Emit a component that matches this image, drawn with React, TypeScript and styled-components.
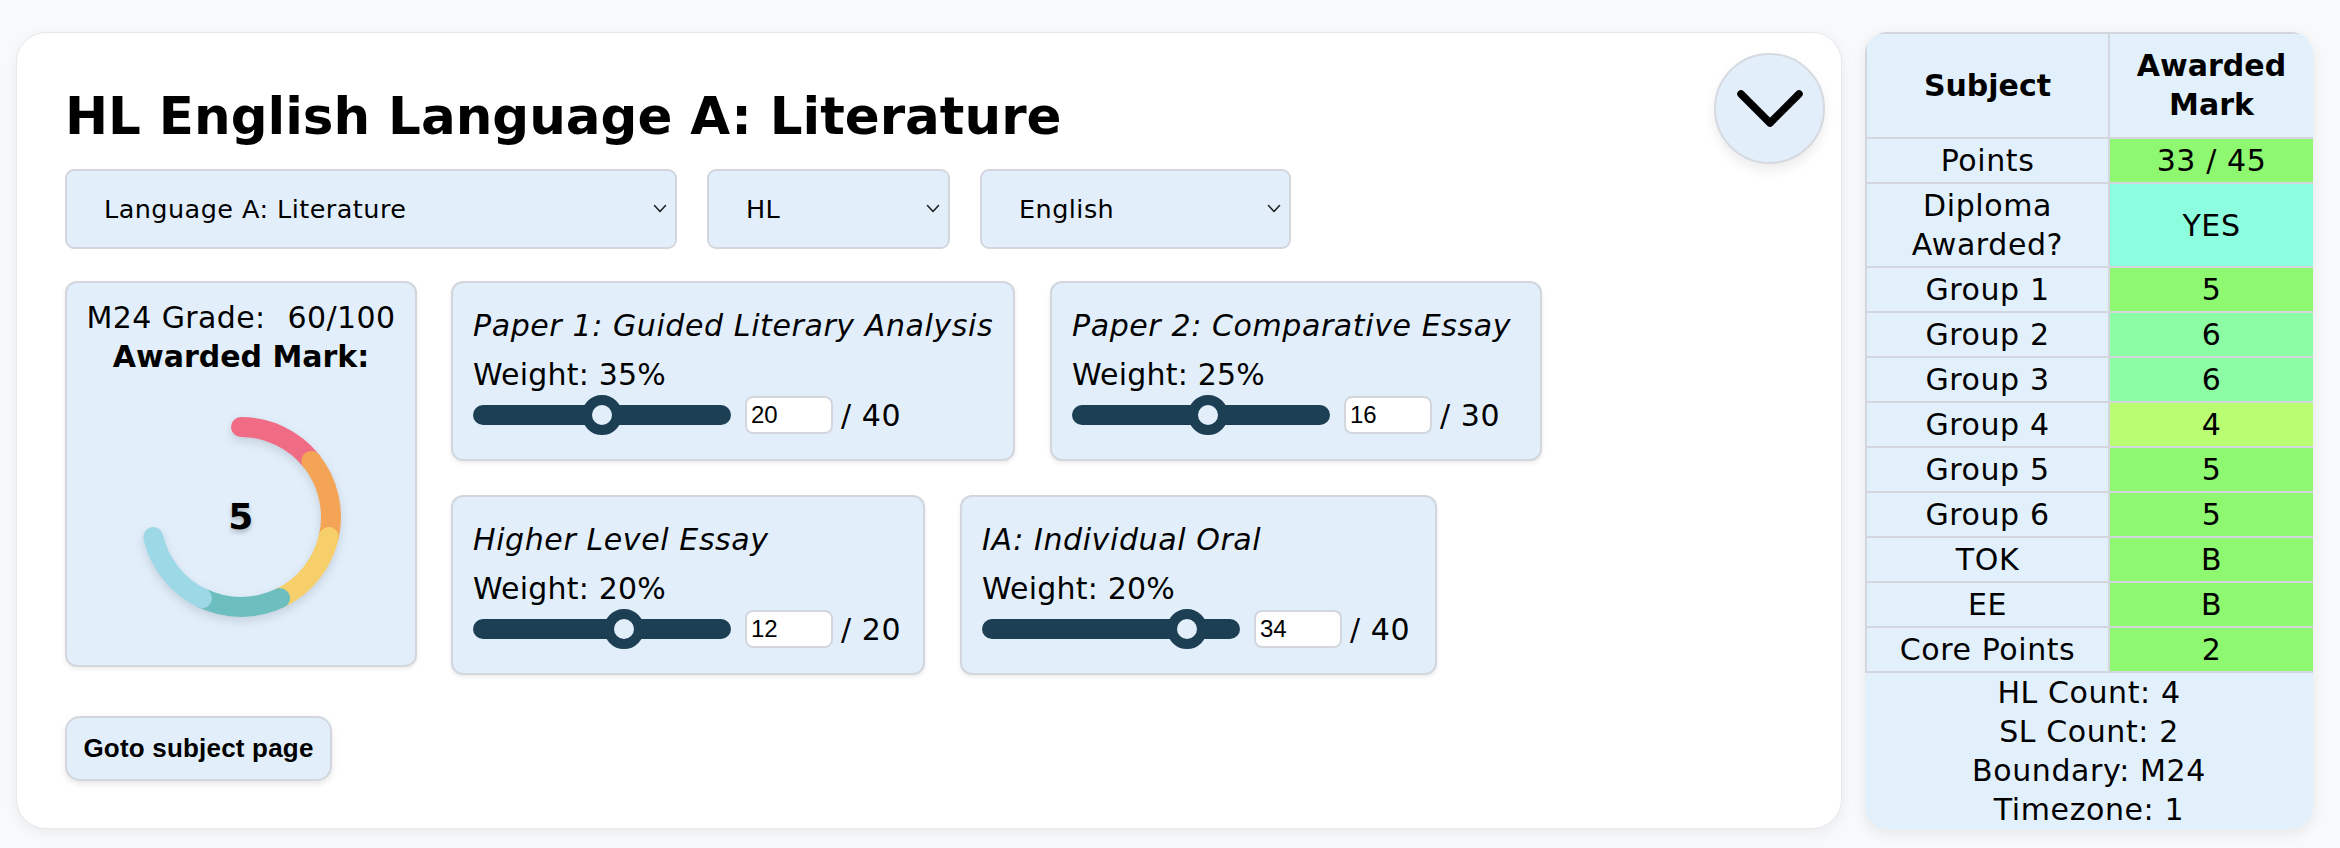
import React from 'react';
import styled, { createGlobalStyle } from 'styled-components';

const FONT = `"DejaVu Sans", Inter, sans-serif`;
const ARIAL = `'Liberation Sans', Arial, sans-serif`;
const LIGHT = '#e2effb';
const LINE = '#d3d7dd';
const NAVY = '#1c3f53';

const GlobalStyle = createGlobalStyle`
  html, body { margin: 0; padding: 0; background: #f8f9fb; }
  body { font-family: ${FONT}; color: #000; }
  * { box-sizing: border-box; }
`;

const Page = styled.div`
  display: flex;
  align-items: flex-start;
  gap: 23px;
  width: 2340px;
  height: 848px;
  padding: 32px 27px 19px 16px;
`;

const Card = styled.section`
  flex: 1;
  height: 797px;
  background: #fff;
  border: 1.5px solid #e6e8ec;
  border-radius: 30px;
  box-shadow: 0 4px 14px rgba(0, 0, 0, 0.06);
  padding: 20px 16px 0 48px;
  display: flex;
  flex-direction: column;
`;

const Header = styled.div`
  display: flex;
  justify-content: space-between;
  align-items: flex-start;
`;

const Title = styled.h1`
  margin: 31px 0 0;
  font-size: 51.5px;
  font-weight: 700;
  line-height: 65px;
`;

const ToggleButton = styled.button`
  width: 111px;
  height: 111px;
  border-radius: 50%;
  background: ${LIGHT};
  border: 2px solid #d6dae0;
  box-shadow: 0 6px 12px rgba(0, 0, 0, 0.08);
  display: flex;
  align-items: center;
  justify-content: center;
  padding: 0;
`;

const SelectRow = styled.div`
  display: flex;
  gap: 30px;
  margin-top: 5px;
`;

const SelectWrap = styled.div<{ $w: number }>`
  position: relative;
  width: ${(p) => p.$w}px;
  height: 80px;
`;

const Select = styled.select`
  appearance: none;
  width: 100%;
  height: 100%;
  background: ${LIGHT};
  border: 2px solid ${LINE};
  border-radius: 9px;
  padding: 0 0 0 37px;
  font-family: ${FONT};
  font-size: 25.5px;
  letter-spacing: 0.45px;
  color: #000;
`;

const SelectChevron = styled.svg`
  position: absolute;
  right: 10px;
  top: 35px;
  pointer-events: none;
`;

const Content = styled.div`
  display: flex;
  align-items: flex-start;
  gap: 34px;
  margin-top: 32px;
`;

const GradeCard = styled.div`
  width: 352px;
  height: 386px;
  background: ${LIGHT};
  border: 2px solid ${LINE};
  border-radius: 12px;
  box-shadow: 0 2px 4px rgba(0, 0, 0, 0.08);
  padding-top: 15px;
  display: flex;
  flex-direction: column;
  align-items: center;
  font-size: 30px;
  line-height: 39px;
  letter-spacing: 0.4px;
`;

const GradeLine = styled.div`
  display: flex;
  gap: 22px;
`;

const AwardedLabel = styled.div`
  font-weight: 700;
  letter-spacing: 0;
`;

const Donut = styled.div`
  display: grid;
  place-items: center;
  margin-top: 21px;
  width: 240px;
  height: 240px;
  & > * {
    grid-area: 1 / 1;
  }
`;

const DonutSvg = styled.svg`
  filter: drop-shadow(0 4px 5px rgba(0, 0, 0, 0.13));
`;

const DonutValue = styled.span`
  font-size: 36px;
  font-weight: 700;
  line-height: 1;
  text-shadow: 0 3px 5px rgba(0, 0, 0, 0.25);
`;

const Components = styled.div`
  flex: 1;
  display: flex;
  flex-wrap: wrap;
  align-content: flex-start;
  gap: 34px 35px;
`;

const CompCard = styled.div<{ $w: number }>`
  width: ${(p) => p.$w}px;
  background: ${LIGHT};
  border: 2px solid ${LINE};
  border-radius: 12px;
  box-shadow: 0 2px 4px rgba(0, 0, 0, 0.08);
  padding: 23px 20px 24px 20px;
  font-size: 30px;
  line-height: 39px;
  letter-spacing: 0.6px;
  white-space: nowrap;
`;

const CompTitle = styled.div`
  font-style: italic;
  margin-bottom: 10px;
`;

const Weight = styled.div`
  margin-bottom: 1px;
  letter-spacing: 0.2px;
`;

const SliderRow = styled.div`
  display: flex;
  align-items: center;
  height: 40px;
`;

const Range = styled.input`
  appearance: none;
  -webkit-appearance: none;
  width: 258px;
  height: 40px;
  margin: 0;
  background: transparent;
  &::-webkit-slider-runnable-track {
    height: 20px;
    background: ${NAVY};
    border-radius: 10px;
  }
  &::-webkit-slider-thumb {
    -webkit-appearance: none;
    appearance: none;
    box-sizing: border-box;
    width: 40px;
    height: 40px;
    margin-top: -10px;
    border-radius: 50%;
    background: ${LIGHT};
    border: 10px solid ${NAVY};
  }
`;

const NumInput = styled.input`
  width: 88px;
  height: 38px;
  margin-left: 14px;
  border: 2px solid ${LINE};
  border-radius: 8px;
  background: #fff;
  padding: 0 4px;
  font-family: ${ARIAL};
  font-size: 24px;
  letter-spacing: 0;
  color: #000;
`;

const MaxLabel = styled.span`
  margin-left: 8px;
`;

const GotoButton = styled.button`
  align-self: flex-start;
  margin-top: 41px;
  width: 267px;
  height: 65px;
  background: ${LIGHT};
  border: 2px solid ${LINE};
  border-radius: 15px;
  box-shadow: 0 3px 6px rgba(0, 0, 0, 0.1);
  font-family: ${ARIAL};
  font-weight: 700;
  font-size: 26px;
  letter-spacing: 0.2px;
  color: #000;
  padding: 0;
`;

const Panel = styled.aside`
  width: 448px;
  background: #e2f0fc;
  border-radius: 22px;
  overflow: hidden;
  box-shadow: 0 4px 14px rgba(0, 0, 0, 0.08);
  font-size: 30px;
  line-height: 39px;
  letter-spacing: 0.6px;
`;

const Table = styled.table`
  width: 100%;
  border-collapse: collapse;
  table-layout: fixed;
`;

const Th = styled.th`
  border: 2px solid ${LINE};
  padding: 12px 4px 13px;
  font-weight: 700;
  letter-spacing: 0;
  text-align: center;
`;

const Td = styled.td<{ $bg?: string }>`
  border: 2px solid ${LINE};
  padding: 2px 4px;
  text-align: center;
  font-weight: 400;
  background: ${(p) => p.$bg || 'transparent'};
`;

const Footer = styled.div`
  text-align: center;
`;

const GREEN = '#8ef870';
const AQUA = '#8cfddf';
const MINT = '#8cfca5';
const LIME = '#b8fd72';

const rows: [string, string, string][] = [
  ['Points', '33 / 45', GREEN],
  ['Diploma Awarded?', 'YES', AQUA],
  ['Group 1', '5', GREEN],
  ['Group 2', '6', MINT],
  ['Group 3', '6', MINT],
  ['Group 4', '4', LIME],
  ['Group 5', '5', GREEN],
  ['Group 6', '5', GREEN],
  ['TOK', 'B', GREEN],
  ['EE', 'B', GREEN],
  ['Core Points', '2', GREEN],
];

const components = [
  { title: 'Paper 1: Guided Literary Analysis', weight: 35, value: 20, max: 40, width: 564 },
  { title: 'Paper 2: Comparative Essay', weight: 25, value: 16, max: 30, width: 492 },
  { title: 'Higher Level Essay', weight: 20, value: 12, max: 20, width: 474 },
  { title: 'IA: Individual Oral', weight: 20, value: 34, max: 40, width: 477 },
];

const segColors = ['#ef6c84', '#f3a455', '#f7cf6a', '#6dbfbf', '#9dd8e7'];

function arcPath(a0: number, a1: number, r: number, c: number) {
  const rad = (d: number) => (d * Math.PI) / 180;
  const x0 = c + r * Math.sin(rad(a0));
  const y0 = c - r * Math.cos(rad(a0));
  const x1 = c + r * Math.sin(rad(a1));
  const y1 = c - r * Math.cos(rad(a1));
  return `M ${x0} ${y0} A ${r} ${r} 0 0 1 ${x1} ${y1}`;
}

export default function App() {
  const step = 360 / 7;
  return (
    <>
      <GlobalStyle />
      <Page>
        <Card>
          <Header>
            <Title>HL English Language A: Literature</Title>
            <ToggleButton aria-label="collapse">
              <svg width="66" height="38" viewBox="0 0 66 38" fill="none">
                <polyline points="4,4 33,33 62,4" stroke="#000" strokeWidth="7.5" strokeLinecap="round" strokeLinejoin="round" />
              </svg>
            </ToggleButton>
          </Header>
          <SelectRow>
            {[
              { label: 'Language A: Literature', w: 612 },
              { label: 'HL', w: 243 },
              { label: 'English', w: 311 },
            ].map((s) => (
              <SelectWrap key={s.label} $w={s.w}>
                <Select defaultValue={s.label}>
                  <option>{s.label}</option>
                </Select>
                <SelectChevron width="14" height="9" viewBox="0 0 14 9" fill="none">
                  <polyline points="1.5,1.5 7,7.5 12.5,1.5" stroke="#222" strokeWidth="1.6" strokeLinecap="round" strokeLinejoin="round" />
                </SelectChevron>
              </SelectWrap>
            ))}
          </SelectRow>
          <Content>
            <GradeCard>
              <GradeLine>
                <span>M24 Grade:</span>
                <span>60/100</span>
              </GradeLine>
              <AwardedLabel>Awarded Mark:</AwardedLabel>
              <Donut>
                <DonutSvg width="240" height="240" viewBox="0 0 240 240">
                  {segColors.map((c, i) => (
                    <path
                      key={c}
                      d={arcPath(i * step, (i + 1) * step, 90, 120)}
                      stroke={c}
                      strokeWidth="20"
                      strokeLinecap="round"
                      fill="none"
                    />
                  ))}
                </DonutSvg>
                <DonutValue>5</DonutValue>
              </Donut>
            </GradeCard>
            <Components>
              {components.map((c) => (
                <CompCard key={c.title} $w={c.width}>
                  <CompTitle>{c.title}</CompTitle>
                  <Weight>Weight: {c.weight}%</Weight>
                  <SliderRow>
                    <Range type="range" min={0} max={c.max} defaultValue={c.value} />
                    <NumInput type="text" defaultValue={String(c.value)} />
                    <MaxLabel>/ {c.max}</MaxLabel>
                  </SliderRow>
                </CompCard>
              ))}
            </Components>
          </Content>
          <GotoButton>Goto subject page</GotoButton>
        </Card>
        <Panel>
          <Table>
            <colgroup>
              <col style={{ width: 243 }} />
              <col style={{ width: 205 }} />
            </colgroup>
            <thead>
              <tr>
                <Th>Subject</Th>
                <Th>Awarded Mark</Th>
              </tr>
            </thead>
            <tbody>
              {rows.map(([k, v, bg]) => (
                <tr key={k}>
                  <Td>{k}</Td>
                  <Td $bg={bg}>{v}</Td>
                </tr>
              ))}
            </tbody>
          </Table>
          <Footer>
            <div>HL Count: 4</div>
            <div>SL Count: 2</div>
            <div>Boundary: M24</div>
            <div>Timezone: 1</div>
          </Footer>
        </Panel>
      </Page>
    </>
  );
}
